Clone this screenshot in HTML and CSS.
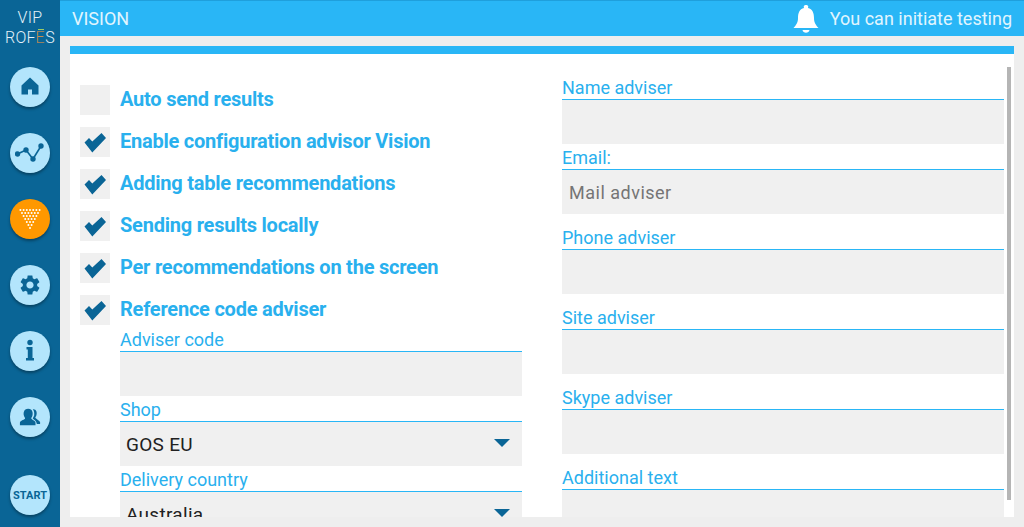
FILE: index.html
```html
<!DOCTYPE html>
<html lang="en">
<head>
    <meta charset="UTF-8">
    <meta name="viewport" content="width=device-width, initial-scale=1.0">
    <title>Vision</title>
    <link rel="stylesheet" href="styles.css">
</head>
<body>
    <div class="app">
        <nav class="sidebar">
            <div class="logo">
                <div>VIP</div>
                <div>ROF<span class="logo-e">E</span>S</div>
            </div>
            <a class="nav-btn">
                <svg viewBox="0 0 24 24" width="24" height="24"><path d="M12 2.5 L3.5 10.5 V19.5 H10 V14.5 H14 V19.5 H20.5 V10.5 Z"/></svg>
            </a>
            <a class="nav-btn">
                <svg viewBox="0 0 30 24" width="30" height="24">
                    <polyline points="2.5,13 11,9 18,18 26,5" fill="none" stroke="#0a6596" stroke-width="1.6"/>
                    <circle cx="2.5" cy="13" r="2.7"/><circle cx="11" cy="9" r="2.7"/><circle cx="18" cy="18" r="2.7"/><circle cx="26" cy="5" r="2.7"/>
                </svg>
            </a>
            <a class="nav-btn nav-btn-active">
                <svg viewBox="0 0 24 22" width="24" height="22" class="v-dots">
                    <line x1="2.4" y1="2" x2="21.7" y2="2"/>
                    <line x1="4" y1="5" x2="20.1" y2="5"/>
                    <line x1="5.6" y1="8" x2="18.5" y2="8"/>
                    <line x1="7.2" y1="11" x2="16.9" y2="11"/>
                    <line x1="8.8" y1="14" x2="15.3" y2="14"/>
                    <line x1="10.4" y1="17" x2="13.7" y2="17"/>
                    <line x1="12" y1="20" x2="12.1" y2="20"/>
                </svg>
            </a>
            <a class="nav-btn">
                <svg viewBox="0 0 24 24" width="24" height="24"><path d="M19.14 12.94c.04-.3.06-.61.06-.94 0-.32-.02-.64-.07-.94l2.03-1.58c.18-.14.23-.41.12-.61l-1.92-3.32c-.12-.22-.37-.29-.59-.22l-2.39.96c-.5-.38-1.03-.7-1.62-.94L14.4 2.81c-.04-.24-.24-.41-.48-.41h-3.84c-.24 0-.43.17-.47.41L9.25 5.35c-.59.24-1.13.57-1.62.94l-2.39-.96c-.22-.08-.47 0-.59.22L2.74 8.87c-.12.21-.08.47.12.61l2.03 1.58c-.05.3-.09.63-.09.94s.02.64.07.94l-2.03 1.58c-.18.14-.23.41-.12.61l1.92 3.32c.12.22.37.29.59.22l2.39-.96c.5.38 1.03.7 1.62.94l.36 2.54c.05.24.24.41.48.41h3.84c.24 0 .44-.17.47-.41l.36-2.54c.59-.24 1.13-.56 1.62-.94l2.39.96c.22.08.47 0 .59-.22l1.92-3.32c.12-.22.07-.47-.12-.61l-2.01-1.58zM12 15.6c-1.98 0-3.6-1.62-3.6-3.6s1.62-3.6 3.6-3.6 3.6 1.62 3.6 3.6-1.62 3.6-3.6 3.6z"/></svg>
            </a>
            <a class="nav-btn">
                <svg viewBox="0 0 24 24" width="24" height="24"><circle cx="12" cy="3.5" r="2.7"/><path d="M8.5 8 H14.5 V19 H16 V21.5 H8 V19 H9.8 V10.5 H8.5 Z"/></svg>
            </a>
            <a class="nav-btn">
                <svg viewBox="0 0 24 24" width="22" height="22">
                    <path d="M1 21 V18.5 C1 16 5 15.5 6.5 14 C7 13 6 12.5 5.5 11 C4.5 8 5 3 10 3 C15 3 15.5 8 14.5 11 C14 12.5 13 13 13.5 14 C15 15.5 17.5 16 18 18 V21 Z"/>
                    <path d="M15 3.5 C19 3 20 7 19 10 C18.6 11.5 17.5 12 18 13 C19 14 21.5 15.5 23 17.5 V19.5 H19.5 C19 16 16.5 15 15 13.5 C15.5 12.5 16 11.5 16.5 10.5 C17 8 16.5 5 15 3.5 Z"/>
                </svg>
            </a>
            <a class="nav-btn nav-btn-start">START</a>
        </nav>

        <div class="main">
            <header class="topbar">
                <span>VISION</span>
                <div class="notice">
                    <svg viewBox="0 0 26 30" width="26" height="30"><path d="M13 1 a2 2 0 0 1 2 3 C19.5 5 21 9 21 14 C21 19 23 21 25.5 24 H0.5 C3 21 5 19 5 14 C5 9 6.5 5 11 4 a2 2 0 0 1 2-3 Z M9.5 26 H16.5 C16 29.5 10 29.5 9.5 26 Z" fill="#fff"/></svg>
                    <span>You can initiate testing</span>
                </div>
            </header>

            <section class="panel">
                <div class="panel-body">
                    <div class="col-left">
                        <div class="check-row"><span class="checkbox"></span><span class="check-label">Auto send results</span></div>
                        <div class="check-row"><span class="checkbox checked"></span><span class="check-label">Enable configuration advisor Vision</span></div>
                        <div class="check-row"><span class="checkbox checked"></span><span class="check-label">Adding table recommendations</span></div>
                        <div class="check-row"><span class="checkbox checked"></span><span class="check-label">Sending results locally</span></div>
                        <div class="check-row"><span class="checkbox checked"></span><span class="check-label">Per recommendations on the screen</span></div>
                        <div class="check-row"><span class="checkbox checked"></span><span class="check-label">Reference code adviser</span></div>
                        <div class="sub-fields">
                            <div class="field"><label>Adviser code</label><div class="box"></div></div>
                            <div class="field tight"><label>Shop</label><div class="box select">GOS EU</div></div>
                            <div class="field tight"><label>Delivery country</label><div class="box select">Australia</div></div>
                        </div>
                    </div>
                    <div class="col-right">
                        <div class="field"><label>Name adviser</label><div class="box"></div></div>
                        <div class="field tight"><label>Email:</label><div class="box hint">Mail adviser</div></div>
                        <div class="field"><label>Phone adviser</label><div class="box"></div></div>
                        <div class="field"><label>Site adviser</label><div class="box"></div></div>
                        <div class="field"><label>Skype adviser</label><div class="box"></div></div>
                        <div class="field"><label>Additional text</label><div class="box"></div></div>
                    </div>
                </div>
                <div class="scrollbar"></div>
            </section>
        </div>
    </div>
</body>
</html>
```

FILE: styles.css
```css
html, body {
    margin: 0;
    height: 100%;
    overflow: hidden;
}
body {
    font-family: Roboto, 'Noto Sans', sans-serif;
    background: #eeeeee;
}
.app {
    display: flex;
    height: 527px;
}

/* left menu */
.sidebar {
    width: 60px;
    flex: none;
    background: #0a6596;
    display: flex;
    flex-direction: column;
    align-items: center;
    gap: 26px;
    box-sizing: border-box;
    padding-bottom: 12px;
}
.logo {
    height: 33px;
    padding-top: 8px;
    color: #e3f1f8;
    font-size: 16px;
    font-weight: 300;
    line-height: 20px;
    text-align: center;
    letter-spacing: 0.3px;
}
.logo-e {
    position: relative;
    color: transparent;
    background: repeating-linear-gradient(#d9913f 0 2px, #8fa36a 2px 3px, #c98a52 3px 5px);
    -webkit-background-clip: text;
    background-clip: text;
}
.logo-e::before {
    content: "";
    position: absolute;
    left: 2px;
    top: 1px;
    width: 6px;
    height: 1px;
    background: #9ccc65;
}
.nav-btn {
    width: 40px;
    height: 40px;
    border-radius: 50%;
    background: #b3e5fc;
    box-shadow: 0 2px 3px rgba(0,0,0,0.35);
    display: flex;
    align-items: center;
    justify-content: center;
    color: #0a6596;
}
.nav-btn svg {
    fill: #0a6596;
}
.nav-btn-active {
    background: #ff9800;
}
.v-dots line {
    stroke: #fff;
    stroke-width: 2;
    stroke-linecap: round;
    stroke-dasharray: 0 3.2;
}
.nav-btn-start {
    margin-top: auto;
    font-size: 11px;
    font-weight: 700;
}

/* top bar */
.main {
    flex: 1;
    min-width: 0;
    display: flex;
    flex-direction: column;
}
.topbar {
    height: 36px;
    flex: none;
    background: #29b6f6;
    border-top: 1px solid #1f9fdc;
    box-sizing: border-box;
    display: flex;
    align-items: center;
    justify-content: space-between;
    padding: 0 12px;
    color: #e1f5fe;
    font-size: 18px;
}
.notice {
    display: flex;
    align-items: center;
    gap: 11px;
}

/* content */
.panel {
    position: relative;
    margin: 10px 10px 10px;
    flex: 1;
    min-height: 0;
    background: #fff;
    border-top: 8px solid #29b6f6;
    overflow: hidden;
}
.panel-body {
    display: flex;
    padding: 0 10px;
}
.col-left {
    width: 442px;
    padding-top: 31px;
    flex: none;
}
.col-right {
    width: 442px;
    margin-left: 40px;
    padding-top: 24px;
    margin-top: -4px;
}
.check-row {
    display: flex;
    align-items: center;
    gap: 10px;
    height: 30px;
    margin-bottom: 12px;
    color: #29b0ee;
    font-size: 20px;
    font-weight: 700;
    letter-spacing: -0.23px;
}
.check-label {
    margin-top: -2px;
}
.checkbox {
    width: 30px;
    height: 30px;
    background: #f0f0f0;
    display: block;
    position: relative;
}
.checkbox.checked::after {
    content: "";
    position: absolute;
    inset: 0;
    background: #0a6596;
    clip-path: polygon(4.5px 15.5px, 9px 11px, 12.3px 14.5px, 21.5px 6px, 26px 11px, 12.3px 25.5px);
}
.sub-fields {
    margin-left: 40px;
    margin-top: -11px;
}
.field {
    margin-bottom: 10px;
}
.field.tight {
    margin-top: -10px;
}
.field label {
    display: block;
    height: 25px;
    line-height: 27px;
    color: #29b0ee;
    font-size: 18px;
    border-bottom: 1px solid #29b6f6;
}
.box {
    height: 44px;
    background: #f0f0f0;
    line-height: 44px;
    font-size: 18px;
    box-sizing: border-box;
}
.hint {
    padding-left: 7px;
    color: #757575;
    letter-spacing: 0.5px;
    line-height: 46px;
}
.select {
    position: relative;
    padding-left: 6px;
    color: #212121;
    font-size: 19px;
    letter-spacing: 0.3px;
    line-height: 46px;
}
.select::after {
    content: "";
    position: absolute;
    right: 12px;
    top: 17px;
    border-left: 8px solid transparent;
    border-right: 8px solid transparent;
    border-top: 8px solid #0a6596;
}
.scrollbar {
    position: absolute;
    top: 13px;
    right: 3px;
    width: 4px;
    height: 433px;
    background: #b5b5b5;
}
```
